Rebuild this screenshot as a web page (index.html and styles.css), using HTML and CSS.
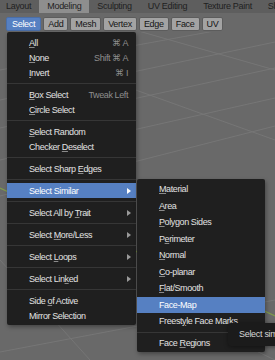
FILE: index.html
```html
<!DOCTYPE html>
<html lang="en">
<head>
    <meta charset="UTF-8">
    <meta name="viewport" content="width=device-width, initial-scale=1.0">
    <title>Select Menu - Modeling</title>
    <link rel="stylesheet" href="styles.css">
</head>
<body>
    <div class="topbar">
        <div class="tab">Layout</div>
        <div class="tab active">Modeling</div>
        <div class="tab">Sculpting</div>
        <div class="tab">UV Editing</div>
        <div class="tab">Texture Paint</div>
        <div class="tab">Shading</div>
    </div>
    <div class="header">
        <div class="hbtn selected">Select</div>
        <div class="hbtn">Add</div>
        <div class="hbtn">Mesh</div>
        <div class="hbtn">Vertex</div>
        <div class="hbtn">Edge</div>
        <div class="hbtn">Face</div>
        <div class="hbtn">UV</div>
    </div>
    <div class="viewport">
        <svg class="grid" width="275" height="328" viewBox="0 32 275 328">
            <g stroke="#767676" stroke-width="1" fill="none">
                <line x1="0" y1="70" x2="275" y2="20"/>
                <line x1="0" y1="100" x2="275" y2="42"/>
                <line x1="0" y1="128" x2="275" y2="68"/>
                <line x1="0" y1="160" x2="275" y2="98"/>
                <line x1="0" y1="196" x2="275" y2="126"/>
                <line x1="0" y1="352" x2="275" y2="300"/>
                <line x1="100" y1="20" x2="275" y2="70"/>
                <line x1="80" y1="70" x2="275" y2="140"/>
                <line x1="0" y1="260" x2="90" y2="360"/>
                <line x1="150" y1="300" x2="275" y2="360"/>
            </g>
            <line x1="0" y1="188" x2="275" y2="316" stroke="#7f9a4c" stroke-width="1.2"/>
        </svg>
    </div>

    <div class="menu main-menu">
        <div class="item"><span><u>A</u>ll</span><span class="key">⌘ A</span></div>
        <div class="item"><span><u>N</u>one</span><span class="key">Shift ⌘ A</span></div>
        <div class="item"><span><u>I</u>nvert</span><span class="key">⌘ I</span></div>
        <div class="sep"></div>
        <div class="item"><span><u>B</u>ox Select</span><span class="key">Tweak Left</span></div>
        <div class="item"><span><u>C</u>ircle Select</span></div>
        <div class="sep"></div>
        <div class="item"><span><u>S</u>elect Random</span></div>
        <div class="item"><span>Checker <u>D</u>eselect</span></div>
        <div class="sep"></div>
        <div class="item"><span>Select Sharp <u>E</u>dges</span></div>
        <div class="sep"></div>
        <div class="item hl"><span>Select Similar</span><span class="arrow"></span></div>
        <div class="sep"></div>
        <div class="item"><span>Select All by <u>T</u>rait</span><span class="arrow"></span></div>
        <div class="sep"></div>
        <div class="item"><span>Select <u>M</u>ore/Less</span><span class="arrow"></span></div>
        <div class="sep"></div>
        <div class="item"><span>Select <u>L</u>oops</span><span class="arrow"></span></div>
        <div class="sep"></div>
        <div class="item"><span>Select Lin<u>k</u>ed</span><span class="arrow"></span></div>
        <div class="sep"></div>
        <div class="item"><span>Side <u>o</u>f Active</span></div>
        <div class="item"><span>Mirror Selection</span></div>
    </div>

    <div class="menu sub-menu">
        <div class="item"><span><u>M</u>aterial</span></div>
        <div class="item"><span><u>A</u>rea</span></div>
        <div class="item"><span><u>P</u>olygon Sides</span></div>
        <div class="item"><span>P<u>e</u>rimeter</span></div>
        <div class="item"><span><u>N</u>ormal</span></div>
        <div class="item"><span><u>C</u>o-planar</span></div>
        <div class="item"><span><u>F</u>lat/Smooth</span></div>
        <div class="item hl"><span>Face-Map</span></div>
        <div class="item"><span>Freest<u>y</u>le Face Marks</span></div>
        <div class="sep"></div>
        <div class="item"><span>Face <u>R</u>egions</span></div>
    </div>

    <div class="tooltip">Select similar faces by face map</div>
</body>
</html>
```

FILE: styles.css
```css
body {
    margin: 0;
    padding: 0;
    width: 275px;
    height: 360px;
    overflow: hidden;
    position: relative;
    background-color: #696969;
    font-family: "Liberation Sans", Arial, sans-serif;
    font-size: 9px;
    letter-spacing: -0.3px;
}
.topbar {
    height: 13px;
    background-color: #5e5e5e;
    display: flex;
    margin-left: -2px;
    white-space: nowrap;
}
.tab {
    padding: 0 8px;
    line-height: 13px;
    color: #1e1e1e;
}
.tab.active {
    background-color: #8e8e8e;
}
.header {
    height: 19px;
    display: flex;
    align-items: flex-start;
    gap: 2px;
    padding: 4px 0 0 6px;
    box-sizing: border-box;
    position: relative;
    z-index: 2;
}
.hbtn {
    height: 14px;
    line-height: 13px;
    padding: 0 4px;
    box-sizing: border-box;
    background-color: #a3a3a3;
    border: 1px solid #5c5c5c;
    border-radius: 2px;
    color: #151515;
}
.hbtn.selected {
    background-color: #5680c2;
    border-color: #4a6ea8;
    color: #ffffff;
    padding: 0 5px;
}
.viewport {
    height: 328px;
    position: relative;
}
.grid {
    position: absolute;
    left: 0;
    top: 0;
}
.menu {
    position: absolute;
    background-color: #1f1f1f;
    box-shadow: 1px 2px 4px rgba(0, 0, 0, 0.35);
    border-radius: 2px;
    color: #e2e2e2;
    letter-spacing: -0.4px;
    z-index: 3;
}
.main-menu {
    left: 7px;
    top: 32px;
    width: 129px;
    padding: 3px 0 2px;
}
.main-menu .item {
    height: 15px;
}
.sub-menu {
    left: 137px;
    top: 179px;
    width: 128px;
    padding: 2px 0 1px;
    z-index: 4;
}
.sub-menu .item {
    height: 16.5px;
}
.sub-menu .sep {
    height: 5px;
}
.item {
    display: flex;
    justify-content: space-between;
    align-items: center;
    padding: 0 8px 0 22px;
    white-space: nowrap;
}
.item u {
    text-decoration-color: #8a8a8a;
    text-underline-offset: 1px;
}
.item.hl {
    background-color: #5680c2;
    color: #ffffff;
}
.key {
    color: #8e8e8e;
}
.arrow {
    width: 0;
    height: 0;
    border-top: 3px solid transparent;
    border-bottom: 3px solid transparent;
    border-left: 4px solid #9a9a9a;
    margin-right: -3px;
}
.item.hl .arrow {
    border-left-color: #ffffff;
}
.sep {
    height: 7px;
    display: flex;
    align-items: center;
}
.sep::before {
    content: "";
    flex: 1;
    height: 1px;
    background-color: #363636;
}
.tooltip {
    position: absolute;
    left: 228px;
    top: 323px;
    height: 23px;
    line-height: 22px;
    padding: 0 10px 0 11px;
    white-space: nowrap;
    background-color: #1b1b1b;
    border-radius: 3px;
    box-shadow: 0 1px 4px rgba(0, 0, 0, 0.4);
    color: #d6d6d6;
    z-index: 5;
}
```
